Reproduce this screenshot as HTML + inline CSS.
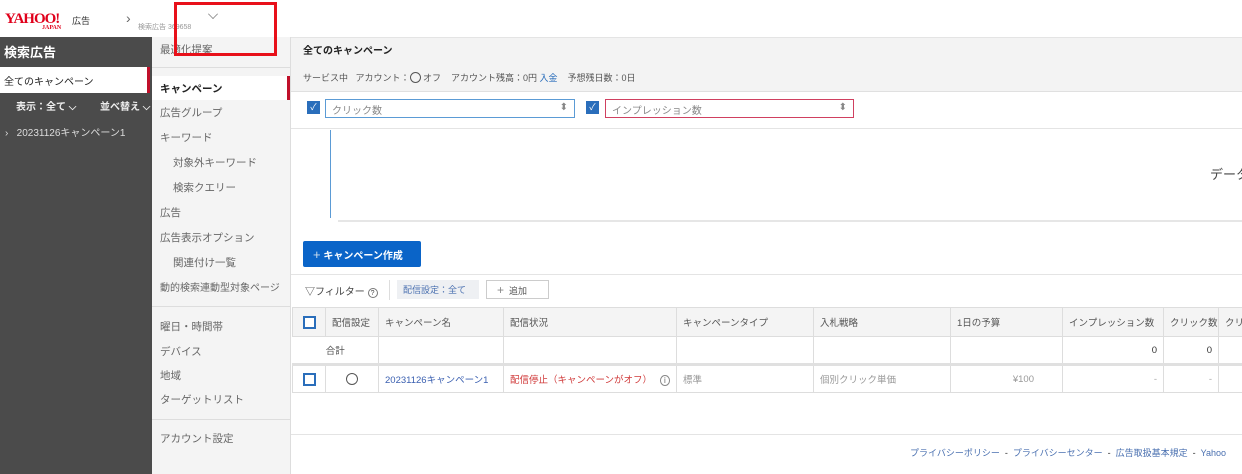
<!DOCTYPE html>
<html><head><meta charset="utf-8"><style>
*{box-sizing:border-box;margin:0;padding:0}
body{width:1242px;height:474px;overflow:hidden;background:#fff;font-family:"Liberation Sans","Noto Sans CJK JP",sans-serif;font-size:11px;color:#333;position:relative}
.a{position:absolute;white-space:nowrap}
.side1{position:absolute;left:0;top:37px;width:152px;height:437px;background:#4b4b4b}
.side2{position:absolute;left:152px;top:37px;width:139px;height:437px;background:#f4f4f4;border-right:1px solid #ddd}
.nav{position:absolute;left:160px;color:#666;font-size:10.5px}
.sub{left:173px}
table{border-collapse:collapse;position:absolute;left:292px;top:307px;font-size:9.5px;color:#555;table-layout:fixed;width:950px}
td{border:1px solid #ddd;padding:0 6px;height:28px;white-space:nowrap;overflow:hidden}
tr.h td{background:#f4f4f4;height:29px}
.cb{display:inline-block;width:13px;height:13px;border:2px solid #2a6ebb;background:#fff;vertical-align:middle}
</style></head><body>
<div class="a" style="left:5px;top:11px;font:bold 15px 'Liberation Serif',serif;color:#e0001b;letter-spacing:-1px">YAHOO!</div>
<div class="a" style="left:42px;top:25px;font:bold 6px 'Liberation Serif';color:#e0001b">JAPAN</div>
<div class="a" style="left:72px;top:14px;font-size:9px;color:#333">広告</div>
<div class="a" style="left:126px;top:10px;font-size:14px;color:#666">›</div>
<div class="a" style="left:138px;top:22px;font-size:7px;color:#999">検索広告 369658</div>
<div class="a" style="left:208px;top:9px;width:10px;height:10px;border-right:1px solid #777;border-bottom:1px solid #777;transform:rotate(45deg) scale(.7)"></div>
<div class="a" style="left:174px;top:2px;width:103px;height:54px;border:3px solid #e8101a;z-index:5"></div>

<div class="side1"></div>
<div class="a" style="left:4px;top:42px;color:#fff;font-weight:bold;font-size:13px">検索広告</div>
<div class="a" style="left:0;top:67px;width:150px;height:26px;background:#fff;border-right:3px solid #c0102a"></div>
<div class="a" style="left:4px;top:73px;font-size:10px;color:#222">全てのキャンペーン</div>
<div class="a" style="left:16px;top:98px;font-size:10px;color:#eee;font-weight:bold">表示：全て ⌵</div>
<div class="a" style="left:100px;top:98px;font-size:10px;color:#eee;font-weight:bold">並べ替え ⌵</div>
<div class="a" style="left:5px;top:124px;font-size:10px;color:#ddd">›&nbsp;&nbsp; 20231126キャンペーン1</div>

<div class="side2"></div>
<div class="nav" style="top:42px">最適化提案</div>
<div class="a" style="left:152px;top:67px;width:138px;height:1px;background:#ddd"></div>
<div class="a" style="left:152px;top:76px;width:138px;height:24px;background:#fff;border-right:3px solid #c0102a"></div>
<div class="nav" style="top:81px;color:#222;font-weight:bold">キャンペーン</div>
<div class="nav" style="top:105px">広告グループ</div>
<div class="nav" style="top:130px">キーワード</div>
<div class="nav sub" style="top:155px">対象外キーワード</div>
<div class="nav sub" style="top:180px">検索クエリー</div>
<div class="nav" style="top:205px">広告</div>
<div class="nav" style="top:230px">広告表示オプション</div>
<div class="nav sub" style="top:255px">関連付け一覧</div>
<div class="nav" style="top:279px;font-size:10px">動的検索連動型対象ページ</div>
<div class="a" style="left:152px;top:306px;width:138px;height:1px;background:#ddd"></div>
<div class="nav" style="top:319px">曜日・時間帯</div>
<div class="nav" style="top:344px">デバイス</div>
<div class="nav" style="top:368px">地域</div>
<div class="nav" style="top:392px">ターゲットリスト</div>
<div class="a" style="left:152px;top:419px;width:138px;height:1px;background:#ddd"></div>
<div class="nav" style="top:431px">アカウント設定</div>

<div class="a" style="left:291px;top:37px;width:951px;height:55px;background:#f3f3f3;border-top:1px solid #e4e4e4;border-bottom:1px solid #e0e0e0"></div>
<div class="a" style="left:303px;top:42px;font-size:10px;font-weight:bold;color:#222">全てのキャンペーン</div>
<div class="a" style="left:303px;top:71px;font-size:9px;color:#555">サービス中&nbsp;&nbsp; アカウント：<span style="display:inline-block;width:11px;height:11px;border:1px solid #555;border-radius:50%;vertical-align:-2px"></span> オフ&nbsp;&nbsp;&nbsp; アカウント残高：0円 <span style="color:#2a6ebb">入金</span>&nbsp;&nbsp;&nbsp; 予想残日数：0日</div>

<div class="a" style="left:307px;top:101px"><span class="cb" style="background:#2a6ebb;color:#fff;font-size:9px;line-height:9px;text-align:center">✓</span></div>
<div class="a" style="left:325px;top:99px;width:250px;height:19px;border:1px solid #5b9bd5;padding:2px 6px;color:#888;font-size:10px">クリック数<span style="float:right">⬍</span></div>
<div class="a" style="left:586px;top:101px"><span class="cb" style="background:#2a6ebb;color:#fff;font-size:9px;line-height:9px;text-align:center">✓</span></div>
<div class="a" style="left:605px;top:99px;width:249px;height:19px;border:1px solid #d04060;padding:2px 6px;color:#888;font-size:10px">インプレッション数<span style="float:right">⬍</span></div>

<div class="a" style="left:291px;top:128px;width:951px;height:1px;background:#e4e4e4"></div>
<div class="a" style="left:330px;top:130px;width:1px;height:88px;background:#5b9bd5"></div>
<div class="a" style="left:338px;top:220px;width:904px;height:2px;background:#e6e6e6"></div>
<div class="a" style="left:1210px;top:164px;font-size:13px;color:#444">データ</div>

<div class="a" style="left:303px;top:241px;width:118px;height:26px;background:#0a64c8;border-radius:2px;color:#fff;font-size:10px;font-weight:bold;padding-top:6px;padding-left:10px"><span style="font-weight:normal;font-size:13px;color:#cde">+</span> キャンペーン作成</div>
<div class="a" style="left:291px;top:274px;width:951px;height:1px;background:#e4e4e4"></div>
<div class="a" style="left:305px;top:283px;font-size:10px;color:#444">▽フィルター <span style="display:inline-block;width:10px;height:10px;border:1px solid #777;border-radius:50%;font-size:7px;text-align:center;line-height:9px">?</span></div>
<div class="a" style="left:389px;top:280px;width:1px;height:20px;background:#ddd"></div>
<div class="a" style="left:397px;top:280px;width:82px;height:19px;background:#eef0f3;color:#4a70b0;font-size:9px;padding:3px 6px">配信設定：全て</div>
<div class="a" style="left:486px;top:280px;width:63px;height:19px;border:1px solid #ccc;color:#555;font-size:9px;padding:2px 10px"><span style="font-size:12px;color:#888">+</span>&nbsp; 追加</div>

<table>
<colgroup><col style="width:33px"><col style="width:53px"><col style="width:125px"><col style="width:173px"><col style="width:137px"><col style="width:137px"><col style="width:112px"><col style="width:101px"><col style="width:55px"><col style="width:24px"></colgroup>
<tr class="h"><td style="text-align:center;padding:0"><span class="cb"></span></td><td>配信設定</td><td>キャンペーン名</td><td>配信状況</td><td>キャンペーンタイプ</td><td>入札戦略</td><td>1日の予算</td><td>インプレッション数</td><td>クリック数</td><td>クリ</td></tr>
<tr><td colspan="2" style="text-align:center;border-left:none">合計</td><td></td><td></td><td></td><td></td><td></td><td style="text-align:right;color:#333">0</td><td style="text-align:right;color:#333">0</td><td></td></tr>
<tr style="border-top:3px solid #e0e0e0"><td style="text-align:center;padding:0"><span class="cb"></span></td><td style="text-align:center"><span style="display:inline-block;width:12px;height:12px;border:1px solid #555;border-radius:50%;vertical-align:middle"></span></td><td style="color:#3a5fb0">20231126キャンペーン1</td><td style="color:#d03a3a">配信停止（キャンペーンがオフ）&nbsp;&nbsp; <span style="color:#666;font-size:8px;border:1px solid #888;border-radius:50%;padding:0 3px">i</span></td><td style="color:#999">標準</td><td style="color:#999">個別クリック単価</td><td style="text-align:right;color:#999;padding-right:28px">¥100</td><td style="text-align:right;color:#aaa">-</td><td style="text-align:right;color:#aaa">-</td><td></td></tr>
</table>

<div class="a" style="left:291px;top:434px;width:951px;height:1px;background:#e4e4e4"></div>
<div class="a" style="left:910px;top:446px;font-size:9px;color:#4a70b0">プライバシーポリシー <span style="color:#333">&nbsp;-&nbsp;</span> プライバシーセンター <span style="color:#333">&nbsp;-&nbsp;</span> 広告取扱基本規定 <span style="color:#333">&nbsp;-&nbsp;</span> Yahoo</div>
</body></html>
